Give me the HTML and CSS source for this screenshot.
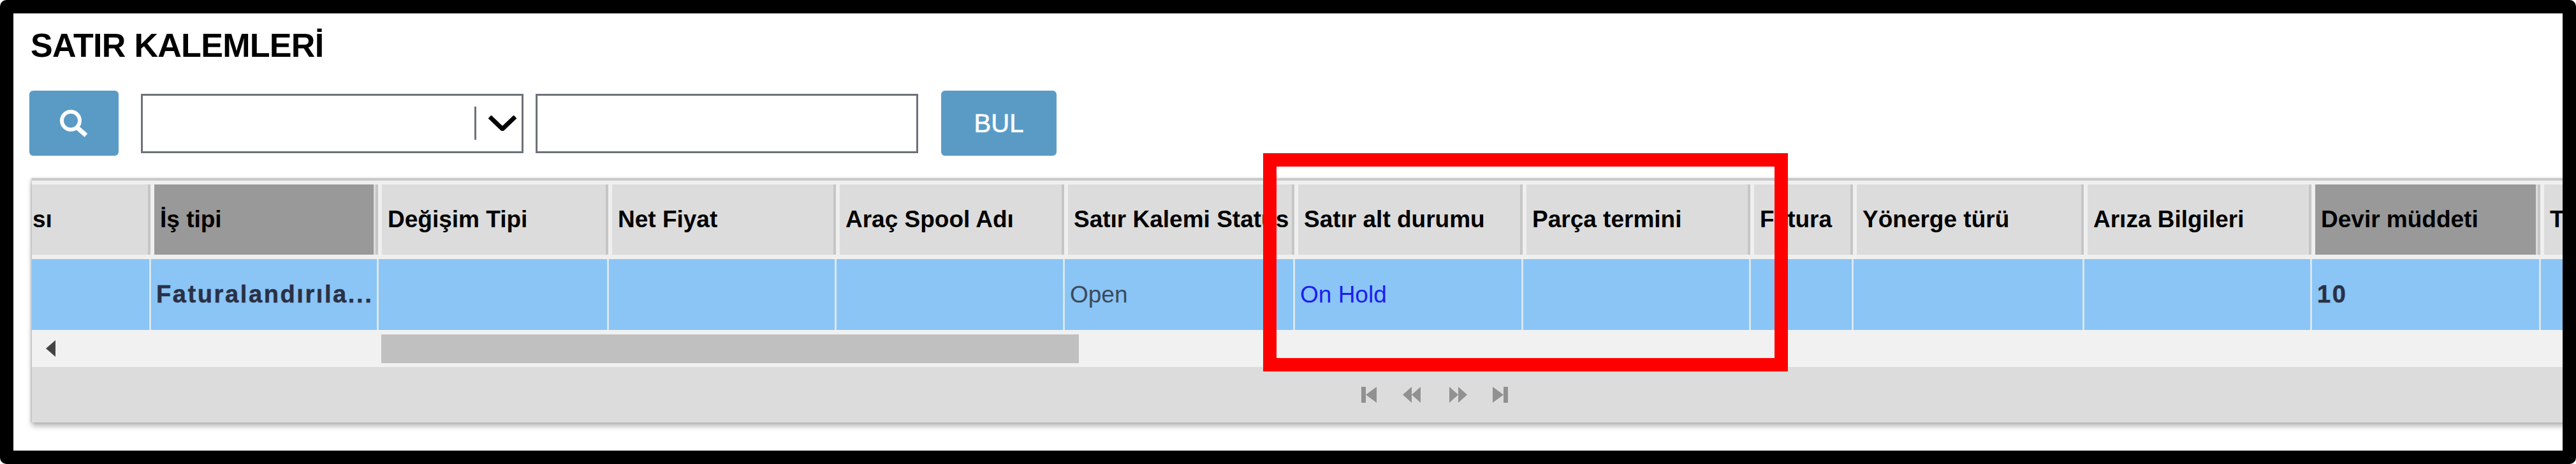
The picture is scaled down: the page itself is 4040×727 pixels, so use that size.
FILE: index.html
```html
<!DOCTYPE html>
<html lang="tr">
<head>
    <meta charset="UTF-8">
    <title>Satır Kalemleri</title>
    <link rel="stylesheet" href="styles.css">
</head>
<body>

<div class="frame">
    <h2 class="title">SATIR KALEMLERİ</h2>

    <div class="toolbar">
        <button class="btn btn-search" type="button">
            <svg width="46" height="44" viewBox="0 0 46 44"><circle cx="18" cy="18" r="14" fill="none" stroke="#fff" stroke-width="6"/><path d="M28 29 L42 41" stroke="#fff" stroke-width="7" fill="none"/></svg>
        </button>
        <div class="select">
            <span class="select-divider"></span>
            <svg class="select-arrow" width="46" height="24" viewBox="0 0 46 24"><path d="M3 2 L23 21 L43 2" fill="none" stroke="#000" stroke-width="7"/></svg>
        </div>
        <input class="text-input" type="text">
        <button class="btn btn-find" type="button">BUL</button>
    </div>

    <div class="grid-panel">
        <div class="grid-row grid-head">
            <div class="head-cell first"><span class="head-label">sı</span></div>
            <div class="head-cell active"><span class="head-label">İş tipi</span></div>
            <div class="head-cell"><span class="head-label">Değişim Tipi</span></div>
            <div class="head-cell"><span class="head-label">Net Fiyat</span></div>
            <div class="head-cell"><span class="head-label">Araç Spool Adı</span></div>
            <div class="head-cell"><span class="head-label">Satır Kalemi Status</span></div>
            <div class="head-cell"><span class="head-label">Satır alt durumu</span></div>
            <div class="head-cell"><span class="head-label">Parça termini</span></div>
            <div class="head-cell"><span class="head-label">Fatura</span></div>
            <div class="head-cell"><span class="head-label">Yönerge türü</span></div>
            <div class="head-cell"><span class="head-label">Arıza Bilgileri</span></div>
            <div class="head-cell active"><span class="head-label">Devir müddeti</span></div>
            <div class="head-cell"><span class="head-label">Te</span></div>
        </div>
        <div class="grid-row grid-data">
            <div class="cell"></div>
            <div class="cell strong">Faturalandırıla...</div>
            <div class="cell"></div>
            <div class="cell"></div>
            <div class="cell"></div>
            <div class="cell muted">Open</div>
            <div class="cell link">On Hold</div>
            <div class="cell"></div>
            <div class="cell"></div>
            <div class="cell"></div>
            <div class="cell"></div>
            <div class="cell strong">10</div>
            <div class="cell"></div>
        </div>
        <div class="scrollbar">
            <svg class="scroll-arrow" width="15" height="26" viewBox="0 0 15 26"><path d="M15 0 L15 26 L0 13 Z" fill="#444"/></svg>
            <div class="scroll-thumb"></div>
        </div>
        <div class="pager">
            <svg width="24" height="25" viewBox="0 0 24 25"><path d="M0 0 H7 V25 H0 Z M24 0 V25 L7 12.5 Z" fill="#919191"/></svg>
            <svg class="pager-prev" width="28" height="25" viewBox="0 0 28 25"><path d="M14 0 V25 L0 12.5 Z M28 0 V25 L14 12.5 Z" fill="#919191"/></svg>
            <svg class="pager-next" width="28" height="25" viewBox="0 0 28 25"><path d="M0 0 V25 L14 12.5 Z M14 0 V25 L28 12.5 Z" fill="#919191"/></svg>
            <svg class="pager-last" width="24" height="25" viewBox="0 0 24 25"><path d="M0 0 V25 L17 12.5 Z M17 0 H24 V25 H17 Z" fill="#919191"/></svg>
        </div>
    </div>

    <div class="highlight"></div>
</div>

</body>
</html>
```

FILE: styles.css
```css
* {
    box-sizing: border-box;
}
body {
    margin: 0;
    background-color: white;
    font-family: "Liberation Sans", Arial, sans-serif;
    overflow: hidden;
}
.frame {
    position: relative;
    width: 4040px;
    height: 727px;
    border: 21px solid #000;
    border-radius: 10px;
    padding: 20px 0 0 25px;
    background-color: white;
    overflow: hidden;
}
.title {
    margin: 0;
    font-size: 52px;
    line-height: 60px;
    font-weight: bold;
    color: #000;
    padding-left: 2px;
    letter-spacing: -0.7px;
}
.toolbar {
    display: flex;
    align-items: center;
    height: 102px;
    margin-top: 41px;
}
.btn {
    display: flex;
    align-items: center;
    justify-content: center;
    height: 102px;
    padding: 0;
    border: none;
    border-radius: 6px;
    background-color: #5a9bc6;
    color: white;
    font-family: inherit;
}
.btn-search {
    width: 140px;
}
.btn-find {
    width: 181px;
    margin-left: 36px;
    font-size: 40px;
    -webkit-text-stroke: 0.6px white;
}
.select,
.text-input {
    width: 600px;
    height: 93px;
    border: 3px solid #6d7179;
    background-color: white;
}
.select {
    display: flex;
    align-items: center;
    margin-left: 35px;
    padding-left: 520px;
}
.select-divider {
    width: 3px;
    height: 52px;
    background-color: #6d7179;
}
.select-arrow {
    margin-left: 18px;
}
.text-input {
    margin-left: 19px;
}
.grid-panel {
    width: 4500px;
    margin: 35px 0 0 4px;
    border-top: 4px solid #c9c9c9;
    background-color: #efefef;
    box-shadow: 0 6px 8px rgba(0, 0, 0, 0.28), -2px 0 3px rgba(0, 0, 0, 0.15);
}
.grid-row {
    display: grid;
    grid-template-columns: 187px 357px 361px 357px 358px 361px 358px 357px 161px 362px 357px 359px 515px;
}
.grid-head {
    height: 116px;
    padding-top: 6px;
}
.head-cell {
    display: flex;
    margin: 0 1px 0 5px;
    background-color: #dcdcdc;
    border-right: 4px solid #c6c6c6;
    overflow: hidden;
}
.head-cell.first {
    margin-left: 0;
}
.head-label {
    flex: 1;
    display: flex;
    align-items: center;
    padding-left: 9px;
    font-size: 37px;
    font-weight: bold;
    color: #000;
    white-space: nowrap;
}
.first .head-label {
    padding-left: 1px;
}
.active .head-label {
    background-color: #999;
    margin-right: 3px;
}
.grid-data {
    height: 111px;
    margin-top: 7px;
}
.cell {
    display: flex;
    align-items: center;
    padding-left: 8px;
    background-color: #8ac5f6;
    border-right: 3px solid #dbe6ef;
    font-size: 37px;
    white-space: nowrap;
    overflow: hidden;
}
.strong {
    font-size: 38px;
    font-weight: bold;
    letter-spacing: 2.6px;
    color: #2a3045;
    -webkit-text-stroke: 0.5px #2a3045;
}
.muted {
    color: #3b4a5c;
}
.link {
    color: #1c1cf2;
}
.scrollbar {
    display: flex;
    align-items: center;
    height: 58px;
    background-color: #f1f1f1;
}
.scroll-arrow {
    margin-left: 22px;
}
.scroll-thumb {
    width: 1094px;
    height: 45px;
    margin-left: 511px;
    background-color: #c0c0c0;
}
.pager {
    display: flex;
    align-items: center;
    height: 87px;
    padding-left: 2085px;
    background-color: #dcdcdc;
}
.pager-prev {
    margin-left: 41px;
}
.pager-next {
    margin-left: 45px;
}
.pager-last {
    margin-left: 40px;
}
/* red box drawn over the table */
.highlight {
    position: absolute;
    left: 1960px;
    top: 219px;
    width: 823px;
    height: 342px;
    border: 21px solid #f00;
}
```
